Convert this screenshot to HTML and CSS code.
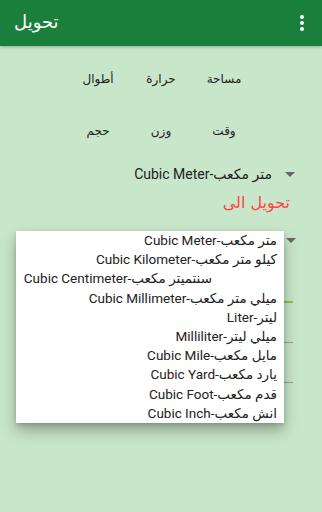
FILE: index.html
```html
<!DOCTYPE html>
<html lang="ar">
<head>
<meta charset="utf-8">
<title>تحويل</title>
<link rel="stylesheet" href="styles.css">
</head>
<body>
<header class="toolbar">
  <span class="title">تحويل</span>
  <span class="menu"><i></i><i></i><i></i></span>
</header>
<main class="content">
  <div class="cats">
    <div class="cat">مساحة</div>
    <div class="cat">حرارة</div>
    <div class="cat">أطوال</div>
    <div class="cat">وقت</div>
    <div class="cat">وزن</div>
    <div class="cat">حجم</div>
  </div>
  <div class="spinner from">
    <span class="sp-text">Cubic Meter-متر مكعب</span>
    <span class="arrow"></span>
  </div>
  <div class="to-label">تحويل الى</div>
  <div class="spinner to">
    <span class="arrow"></span>
  </div>
  <div class="field focused"></div>
  <div class="field"></div>
  <div class="field"></div>

  <ul class="popup">
    <li>Cubic Meter-متر مكعب</li>
    <li>Cubic Kilometer-كيلو متر مكعب</li>
    <li class="short">Cubic Centimeter-سنتميتر مكعب</li>
    <li>Cubic Millimeter-ميلي متر مكعب</li>
    <li>Liter-ليتر</li>
    <li>Milliliter-ميلي ليتر</li>
    <li>Cubic Mile-مايل مكعب</li>
    <li>Cubic Yard-يارد مكعب</li>
    <li>Cubic Foot-قدم مكعب</li>
    <li>Cubic Inch-انش مكعب</li>
  </ul>
</main>
</body>
</html>
```
FILE: styles.css
```css
html, body {
  margin: 0;
  padding: 0;
}
body {
  width: 322px;
  height: 512px;
  overflow: hidden;
  background: #c8e6c9;
  font-family: Roboto, "DejaVu Sans", sans-serif;
  font-weight: 400;
  font-stretch: 100%;
  color: #222;
  position: relative;
}
.toolbar {
  height: 46px;
  background: #1a7f3b;
  display: flex;
  align-items: center;
  justify-content: space-between;
  padding: 0 18px 0 14px;
  box-shadow: 0 1px 3px rgba(0,0,0,0.25);
  position: relative;
  z-index: 1;
}
.title {
  color: #fff;
  font-size: 18px;
  line-height: 24px;
  margin-top: -2px;
}
.menu {
  display: flex;
  flex-direction: column;
  gap: 2px;
}
.menu i {
  display: block;
  width: 4px;
  height: 4px;
  border-radius: 50%;
  background: #fff;
}
.content {
  display: flex;
  flex-direction: column;
}
.cats {
  direction: rtl;
  width: 189px;
  margin: 7px auto 0;
  display: grid;
  grid-template-columns: repeat(3, 63px);
  grid-auto-rows: 52px;
}
.cat {
  display: flex;
  align-items: center;
  justify-content: center;
  font-size: 12px;
  color: #222;
}
.spinner {
  height: 34px;
  display: flex;
  align-items: center;
  justify-content: flex-end;
  padding-right: 27px;
}
.sp-text {
  font-size: 14px;
  white-space: nowrap;
}
.arrow {
  width: 0;
  height: 0;
  border-left: 5px solid transparent;
  border-right: 5px solid transparent;
  border-top: 5px solid #666;
  margin-left: 13px;
}
.to-label {
  height: 24px;
  line-height: 24px;
  text-align: right;
  padding-right: 32px;
  color: #ff4545;
  font-size: 16px;
  word-spacing: 1px;
}
.spinner.to {
  height: 50px;
  padding-right: 26px;
}
.field {
  height: 39px;
  margin: 0 29px 0 30px;
  border-bottom: 1px solid #9a9a9a;
}
.field.focused {
  height: 36px;
  border-bottom: 2px solid #8bc34a;
}
.popup {
  position: absolute;
  left: 16px;
  top: 231px;
  width: 268px;
  margin: 0;
  padding: 0;
  list-style: none;
  background: #fff;
  box-shadow: 0 8px 14px rgba(0,0,0,0.28), 0 2px 4px rgba(0,0,0,0.15);
  z-index: 2;
}
.popup li {
  height: 19.2px;
  line-height: 19.2px;
  text-align: right;
  padding-right: 7px;
  font-size: 13.5px;
  white-space: nowrap;
  color: #222;
}
.popup li.short {
  padding-right: 72px;
}
```
